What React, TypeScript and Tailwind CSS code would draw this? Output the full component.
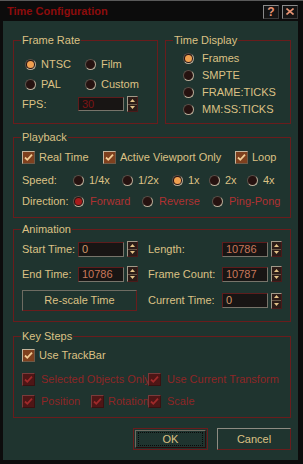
import React from "react";

const font = { fontFamily: '"Liberation Sans", Arial, sans-serif' };

function Radio({ on, tone = "orange" }: { on?: boolean; tone?: "orange" | "red" }) {
  return (
    <span className="flex h-[11px] w-[11px] shrink-0 items-center justify-center rounded-full border border-t-[#5a5048] border-l-[#5a5048] border-b-[#b8ac98] border-r-[#b8ac98] bg-[#261210]">
      {on && <span className={`h-[7px] w-[7px] rounded-full ${tone === "red" ? "bg-[#a81c1c]" : "bg-[#f0a050]"}`} />}
    </span>
  );
}

function RadioItem({ label, on, tone, className = "", labelClass = "text-[#dcc184]" }: { label: string; on?: boolean; tone?: "orange" | "red"; className?: string; labelClass?: string }) {
  return (
    <div className={`flex items-center gap-[5px] ${className}`}>
      <Radio on={on} tone={tone} />
      <span className={`whitespace-nowrap ${labelClass}`}>{label}</span>
    </div>
  );
}

function Check({ disabled }: { disabled?: boolean }) {
  return (
    <span
      className={`flex h-[13px] w-[13px] shrink-0 items-center justify-center border ${
        disabled
          ? "border-t-[#7a3a3a] border-l-[#7a3a3a] border-b-[#3a1010] border-r-[#3a1010] bg-[#4e1616]"
          : "border-t-[#c4b49c] border-l-[#c4b49c] border-b-[#6e5a48] border-r-[#6e5a48] bg-[#7e401e]"
      }`}
    >
      <svg width="9" height="9" viewBox="0 0 9 9">
        <path d="M1 4.5 L3.3 6.8 L8 1.6" fill="none" stroke={disabled ? "#a02a2a" : "#f2cc94"} strokeWidth="1.8" />
      </svg>
    </span>
  );
}

function CheckItem({ label, disabled, className = "", gap = "gap-[4px]" }: { label: string; disabled?: boolean; className?: string; gap?: string }) {
  return (
    <div className={`flex items-center ${gap} ${className}`}>
      <Check disabled={disabled} />
      <span className={`whitespace-nowrap ${disabled ? "text-[#8e2626]" : "text-[#dcc184]"}`}>{label}</span>
    </div>
  );
}

function Spinner() {
  return (
    <div className="ml-[3px] flex h-[16px] w-[11px] flex-col border border-t-[#a09888] border-l-[#a09888] border-b-[#4a1a1a] border-r-[#4a1a1a] bg-[#2c1c18]">
      <div className="flex flex-1 items-center justify-center border-b border-[#6a5a4a]">
        <svg width="5" height="3" viewBox="0 0 5 3"><path d="M0 3 L2.5 0 L5 3Z" fill="#e4c488" /></svg>
      </div>
      <div className="flex flex-1 items-center justify-center">
        <svg width="5" height="3" viewBox="0 0 5 3"><path d="M0 0 L2.5 3 L5 0Z" fill="#e4c488" /></svg>
      </div>
    </div>
  );
}

function Field({ value, tone = "text-[#c8785a]", h = "h-[15px]" }: { value: string; tone?: string; h?: string }) {
  return (
    <div className="flex items-center">
      <div className={`flex ${h} w-[46px] items-center border border-t-[#5e1c1c] border-l-[#5e1c1c] border-b-[#77746a] border-r-[#77746a] bg-[#181514] pl-[3px] ${tone}`}>
        {value}
      </div>
      <Spinner />
    </div>
  );
}

function Group({ title, className, children }: { title: string; className: string; children: React.ReactNode }) {
  return (
    <fieldset className={`border border-[#6a1c1c] ${className}`}>
      <legend className="ml-[7px] px-[1px] leading-[13px] text-[#dcc184]">{title}</legend>
      {children}
    </fieldset>
  );
}

function WinButton({ children, focus }: { children: React.ReactNode; focus?: boolean }) {
  if (focus) {
    return (
      <div className="h-[22px] w-[75px] border border-[#6a1c1c] p-[1px]">
        <div className="flex h-full w-full items-center justify-center border border-t-[#6e6c62] border-l-[#6e6c62] border-b-[#2a0c0c] border-r-[#2a0c0c]">
          <div className="flex h-[14px] w-[65px] items-center justify-center border border-dotted border-[#0a0a0a] text-[#dcc184]">{children}</div>
        </div>
      </div>
    );
  }
  return (
    <div className="flex h-[22px] w-[74px] items-center justify-center border border-t-[#8e8c82] border-l-[#8e8c82] border-b-[#6a1c1c] border-r-[#6a1c1c] text-[#dcc184]">
      {children}
    </div>
  );
}

export default function App() {
  return (
    <div className="flex h-[464px] w-[303px] flex-col border-t border-[#5a5a5a] bg-[#0c0c0c] text-[11px]" style={font}>
      {/* title bar */}
      <div className="flex h-[20px] shrink-0 items-center justify-between pl-[7px] pr-[5px]">
        <span className="text-[11px] font-bold text-[#8c0c0c]">Time Configuration</span>
        <div className="mt-[1px] flex gap-[3px]">
          <div className="flex h-[14px] w-[16px] items-center justify-center border border-t-[#8a8a8a] border-l-[#8a8a8a] border-b-[#3a3a3a] border-r-[#3a3a3a] bg-[#141414] text-[12px] font-bold leading-none text-[#e89474]">?</div>
          <div className="flex h-[14px] w-[16px] items-center justify-center border border-t-[#8a8a8a] border-l-[#8a8a8a] border-b-[#3a3a3a] border-r-[#3a3a3a] bg-[#141414]">
            <svg width="8" height="7" viewBox="0 0 8 7"><path d="M0.5 0.5 L7.5 6.5 M7.5 0.5 L0.5 6.5" stroke="#e89474" strokeWidth="1.6" /></svg>
          </div>
        </div>
      </div>

      {/* client */}
      <div className="mb-[4px] ml-[3px] mr-[5px] flex flex-1 flex-col bg-[#1f342f] pl-[10px] pt-[13px]">
        <div className="flex gap-[7px]">
          <Group title="Frame Rate" className="h-[90px] w-[145px]">
            <div className="flex flex-col pt-[7px]">
              <div className="flex h-[20px] items-center pl-[11px]">
                <RadioItem label="NTSC" on className="w-[60px]" />
                <RadioItem label="Film" />
              </div>
              <div className="flex h-[20px] items-center pl-[11px]">
                <RadioItem label="PAL" className="w-[60px]" />
                <RadioItem label="Custom" />
              </div>
              <div className="flex h-[20px] items-center pl-[8px]">
                <span className="w-[56px] text-[#dcc184]">FPS:</span>
                <Field value="30" tone="text-[#7c1414]" h="h-[14px]" />
              </div>
            </div>
          </Group>
          <Group title="Time Display" className="h-[90px] w-[126px]">
            <div className="flex flex-col pl-[17px] pt-[3px]">
              <RadioItem label="Frames" on className="h-[17px] gap-[8px]" />
              <RadioItem label="SMPTE" className="h-[17px] gap-[8px]" />
              <RadioItem label="FRAME:TICKS" className="h-[17px] gap-[8px]" />
              <RadioItem label="MM:SS:TICKS" className="h-[17px] gap-[8px]" />
            </div>
          </Group>
        </div>

        <Group title="Playback" className="mt-[7px] h-[87px] w-[278px]">
          <div className="flex flex-col pl-[8px] pt-[3px]">
            <div className="flex h-[20px] items-center">
              <CheckItem label="Real Time" className="w-[81px]" />
              <CheckItem label="Active Viewport Only" className="w-[132px]" />
              <CheckItem label="Loop" />
            </div>
            <div className="mt-[3px] flex h-[20px] items-center">
              <span className="w-[51px] text-[#dcc184]">Speed:</span>
              <RadioItem label="1/4x" className="w-[49px]" />
              <RadioItem label="1/2x" className="w-[50px]" />
              <RadioItem label="1x" on className="w-[37px]" />
              <RadioItem label="2x" className="w-[38px]" />
              <RadioItem label="4x" />
            </div>
            <div className="mt-[1px] flex h-[20px] items-center">
              <span className="w-[51px] text-[#dcc184]">Direction:</span>
              <RadioItem label="Forward" on tone="red" className="w-[69px] gap-[6px]" labelClass="text-[#b03232]" />
              <RadioItem label="Reverse" className="w-[70px] gap-[6px]" labelClass="text-[#b03232]" />
              <RadioItem label="Ping-Pong" className="gap-[6px]" labelClass="text-[#b03232]" />
            </div>
          </div>
        </Group>

        <Group title="Animation" className="mt-[5px] h-[99px] w-[278px]">
          <div className="flex flex-col pl-[8px] pt-[5px]">
            <div className="flex h-[16px] items-center">
              <span className="w-[56px] text-[#dcc184]">Start Time:</span>
              <Field value="0" tone="text-[#d09a6a]" />
              <span className="ml-[10px] w-[74px] text-[#dcc184]">Length:</span>
              <Field value="10786" />
            </div>
            <div className="mt-[9px] flex h-[16px] items-center">
              <span className="w-[56px] text-[#dcc184]">End Time:</span>
              <Field value="10786" />
              <span className="ml-[10px] w-[74px] text-[#dcc184]">Frame Count:</span>
              <Field value="10787" />
            </div>
            <div className="mt-[8px] flex h-[21px] items-center">
              <div className="flex h-[21px] w-[115px] items-center justify-center border border-t-[#6e6c62] border-l-[#6e6c62] border-b-[#6a1c1c] border-r-[#6a1c1c] text-[#dcc184]">
                Re-scale Time
              </div>
              <span className="ml-[11px] w-[74px] text-[#dcc184]">Current Time:</span>
              <Field value="0" tone="text-[#d09a6a]" />
            </div>
          </div>
        </Group>

        <Group title="Key Steps" className="mt-[8px] h-[88px] w-[278px]">
          <div className="flex flex-col pl-[8px] pt-[4px]">
            <div className="flex h-[16px] items-center">
              <CheckItem label="Use TrackBar" />
            </div>
            <div className="mt-[8px] flex h-[16px] items-center">
              <CheckItem label="Selected Objects Only" disabled gap="gap-[6px]" className="w-[126px]" />
              <CheckItem label="Use Current Transform" disabled gap="gap-[6px]" />
            </div>
            <div className="mt-[6px] flex h-[16px] items-center">
              <CheckItem label="Position" disabled gap="gap-[6px]" className="w-[69px]" />
              <CheckItem label="Rotation" disabled gap="gap-[4px]" className="w-[57px]" />
              <CheckItem label="Scale" disabled gap="gap-[6px]" />
            </div>
          </div>
        </Group>

        <div className="mt-[10px] flex w-[278px] justify-end gap-[9px]">
          <WinButton focus>OK</WinButton>
          <WinButton>Cancel</WinButton>
        </div>
      </div>
    </div>
  );
}
